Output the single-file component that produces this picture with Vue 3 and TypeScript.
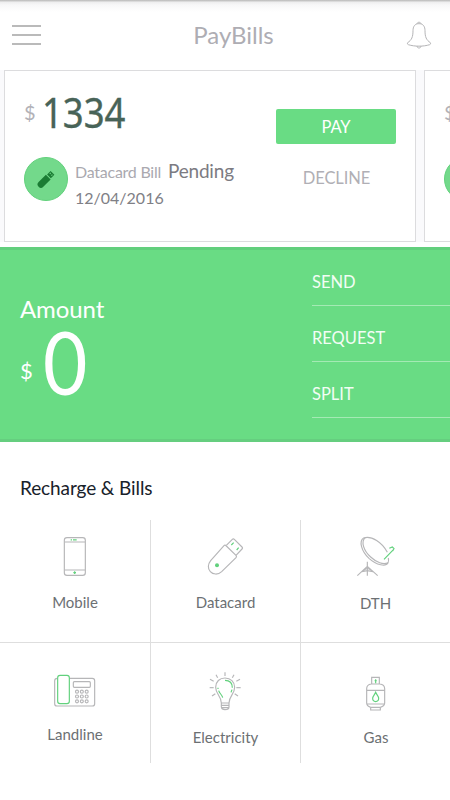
<script setup lang="ts">
interface Service {
  id: string
  label: string
}

const actions: string[] = ['SEND', 'REQUEST', 'SPLIT']

const services: Service[] = [
  { id: 'mobile', label: 'Mobile' },
  { id: 'datacard', label: 'Datacard' },
  { id: 'dth', label: 'DTH' },
  { id: 'landline', label: 'Landline' },
  { id: 'electricity', label: 'Electricity' },
  { id: 'gas', label: 'Gas' },
]

const keys = [126, 140.5, 155].flatMap((x) => [95, 109.5, 124].map((y) => ({ x, y })))
const rays = [
  'M120 37V48', 'M93 44L98 53', 'M147 44L142 53', 'M75 58L86 64', 'M165 58L154 64',
  'M74 83H86', 'M154 83H167', 'M81 108L91 101', 'M159 108L149 101',
]
</script>

<template>
  <div class="screen">
    <header class="topbar">
      <button class="menu" aria-label="Menu"><i></i><i></i><i></i></button>
      <h1>PayBills</h1>
      <svg class="bell" viewBox="0 0 78 84" width="26" height="28">
        <path d="M33 9C33 2 45 2 45 9M39 8C26 8 21 17 21 29C21 48 17 57 5 65Q2 69 7 71C25 77 53 77 71 71Q76 69 73 65C61 57 57 48 57 29C57 17 52 8 39 8ZM33 75C33 83 45 83 45 75" />
      </svg>
    </header>

    <section class="cards">
      <article class="card">
        <div class="details">
          <div class="price"><span class="cur">$</span><span class="value">1334</span></div>
          <div class="bill">
            <span class="badge">
              <svg viewBox="0 0 132 132" width="44" height="44">
                <g transform="rotate(45 65 68)">
                  <path d="M55 57H75V88A10 10 0 0 1 55 88Z" />
                  <path fill-rule="evenodd" d="M57 39H73V54H57ZM60 43V47H63V43ZM67 43V47H70V43Z" />
                </g>
              </svg>
            </span>
            <div class="info">
              <p class="kind"><span>Datacard Bill</span><b>Pending</b></p>
              <p class="date">12/04/2016</p>
            </div>
          </div>
        </div>
        <div class="buttons">
          <button class="pay">PAY</button>
          <button class="decline">DECLINE</button>
        </div>
      </article>
      <article class="card">
        <div class="details">
          <div class="price"><span class="cur">$</span></div>
          <div class="bill"><span class="badge"></span></div>
        </div>
      </article>
    </section>

    <section class="amount">
      <div class="sum">
        <h2>Amount</h2>
        <div class="total"><span class="sign">$</span><span class="zero">0</span></div>
      </div>
      <nav class="actions">
        <a v-for="action in actions" :key="action">{{ action }}</a>
      </nav>
    </section>

    <h3>Recharge &amp; Bills</h3>
    <section class="grid">
      <div v-for="s in services" :key="s.id" class="tile" :class="s.id">
        <svg v-if="s.id === 'mobile'" class="icon" viewBox="15 0 180 165">
          <rect x="73" y="38" width="63" height="113" rx="8" />
          <path d="M74 51H135M74 135H135" />
          <path class="hl" d="M92 44.500H96M99 44.500H110M100 143H108M104 139V147" />
        </svg>
        <svg v-else-if="s.id === 'datacard'" class="icon" viewBox="30 0 180 165">
          <path d="M117 62Q120 59 124 63L153 91Q156 94 153 98L110 140C99 150 84 149 76 140C67 131 69 117 77 107Z" />
          <path d="M124 61L142 43Q145 40 148 43L171 66Q174 69 171 72L153 91" />
          <path class="hl" d="M139 60L146 53M155 75L161 68" />
          <circle class="dot" cx="96" cy="121" r="6" />
        </svg>
        <svg v-else-if="s.id === 'dth'" class="icon" viewBox="30 0 180 165">
          <path d="M157 82C143 54 109 30 86 39C71 48 79 78 102 100C125 121 153 126 159 113Q162 107 160 99" />
          <path d="M91 38C76 50 87 78 107 96C124 112 145 120 159 113" />
          <path d="M97 110V152M97 124L67 152M97 124L128 152M85 136L97 130L110 136M80 140L97 137L114 140" />
          <path class="hl" d="M147 103L176 73M163 70L172 66L177 71L173 78" />
        </svg>
        <svg v-else-if="s.id === 'landline'" class="icon" viewBox="30 0 180 165">
          <path d="M103 55H172Q179 55 179 62V131Q179 138 172 138H66Q59 138 59 131V62Q59 55 67 55" />
          <rect x="115" y="65" width="51" height="17" rx="3" />
          <circle v-for="(k, i) in keys" :key="i" :cx="k.x" :cy="k.y" r="4.500" />
          <rect class="hl" x="68" y="46" width="35" height="85" rx="7" />
        </svg>
        <svg v-else-if="s.id === 'electricity'" class="icon" viewBox="30 0 180 165">
          <path v-for="r in rays" :key="r" :d="r" />
          <path d="M109 129C109 107 92 103 92 82C92 65 104 54 120 54C137 54 149 66 149 82C149 103 132 108 132 129ZM109 129V141Q110 149 120 149Q132 149 132 141V129M109 136H132M109 143H132" />
          <path class="hl" d="M120 61C135 61 142 71 142 83M141 89L138 97M99 83V87M101 92C104 101 111 104 113 113" />
        </svg>
        <svg v-else class="icon" viewBox="30 0 180 165">
          <path d="M110 71V52H133V71M109 72H134C143 73 149 78 149 86V129C149 137 142 140 136 142V150H107V142C101 140 95 137 95 129V86C95 78 101 73 109 72ZM95 91H149M95 132H149M107 142H136" />
          <path class="hl" d="M122 58V70M119 62H125M122 97C119 104 113 109 113 115C113 128 131 128 131 115C131 109 125 104 122 97Z" />
        </svg>
        <span class="label">{{ s.label }}</span>
      </div>
    </section>
  </div>
</template>

<style>
body {
  margin: 0;
  background: #fff;
}
</style>

<style scoped>
.screen {
  width: 450px;
  height: 800px;
  overflow: hidden;
  background: linear-gradient(#bdbdbd 0, #c8c8c8 1px, #ededee 2px, #f7f7f8 5px, #fff 12px);
  font-family: Lato, "Liberation Sans", sans-serif;
}
h1, h2, h3, p { margin: 0; font-weight: 400; }
button { border: 0; padding: 0; background: none; font: inherit; }
svg { display: block; }

.topbar {
  height: 70px;
  padding: 0 18px 0 12px;
  box-sizing: border-box;
  display: flex;
  align-items: center;
  justify-content: space-between;
}
.menu { width: 29px; margin-bottom: 1px; display: flex; flex-direction: column; gap: 7px; }
.menu i { height: 2px; background: #bababa; }
h1 { font-size: 24px; line-height: 30px; color: #aeadb3; padding-left: 20px; }
.bell { fill: none; stroke: #b5b5b7; stroke-width: 3; }

.cards {
  height: 172px;
  margin-bottom: 5px;
  padding-left: 4px;
  background: #fafafc;
  display: flex;
  gap: 8px;
}
.card {
  flex: 0 0 412px;
  height: 172px;
  box-sizing: border-box;
  border: 1px solid #dcdcde;
  padding: 0 19px;
  background: #fff;
  display: flex;
  justify-content: space-between;
}
.price { height: 86px; display: flex; align-items: flex-start; }
.cur { width: 18px; padding-top: 28px; font-size: 20px; line-height: 26px; color: #b2b1b7; }
.value {
  font-family: "Noto Sans", sans-serif;
  font-size: 41px;
  line-height: 82px;
  transform: scaleX(0.89);
  transform-origin: left;
  color: #486357;
  -webkit-text-stroke: 0.400px #486357;
}
.bill { display: flex; }
.badge {
  width: 44px;
  height: 44px;
  box-sizing: border-box;
  border-radius: 50%;
  background: #73d98b;
  border: 1px solid #62d17c;
}
.badge svg { margin: -1px; fill: #1b7c34; }
.info { padding: 1px 0 0 7px; white-space: nowrap; }
.kind { display: flex; align-items: baseline; line-height: 26px; font-size: 16px; letter-spacing: -0.250px; color: #aaa9af; }
.kind b { margin-left: 7px; font-size: 19px; font-weight: 400; letter-spacing: -0.200px; color: #7c7b82; }
.date { line-height: 26px; font-size: 16px; color: #808086; }
.buttons { width: 120px; padding-top: 38px; display: flex; flex-direction: column; }
.pay {
  height: 35px;
  border-radius: 2px;
  background: #69dc84;
  color: #fff;
  font-size: 16.500px;
  letter-spacing: -0.200px;
}
.decline { margin-top: 22px; padding-left: 1px; height: 24px; color: #b0afb5; font-size: 16.500px; letter-spacing: -0.100px; line-height: 24px; }

.amount {
  height: 195px;
  box-sizing: border-box;
  padding-left: 20px;
  background: #69dc84;
  border-top: 3px solid #62cf7d;
  border-bottom: 3px solid #65ce7f;
  display: flex;
  justify-content: space-between;
  color: #fff;
}
.sum { padding-top: 44px; }
h2 { font-size: 24px; line-height: 30px; letter-spacing: -0.100px; }
.total { display: flex; align-items: flex-start; }
.sign { width: 23px; padding-top: 32px; font-size: 22px; line-height: 30px; }
.zero { font-size: 87px; line-height: 76px; transform: scaleX(0.88); transform-origin: left; }
.actions { width: 138px; }
.actions a {
  display: block;
  height: 55px;
  border-bottom: 1px solid #a4eab4;
  line-height: 65px;
  font-size: 16.500px;
  color: #f2fdf4;
}

h3 { margin: 31px 0 17px 20px; font-size: 19px; line-height: 30px; letter-spacing: -0.100px; color: #18212a; }
.grid {
  display: grid;
  grid-template-columns: repeat(3, 150px);
  grid-template-rows: 123px 120px;
}
.tile {
  box-sizing: border-box;
  border-left: 1px solid #dedede;
  padding: 5px 1px 0 0;
  display: flex;
  flex-direction: column;
  align-items: center;
}
.tile:nth-child(3n + 1) { border-left: 0; padding-right: 0; }
.tile:nth-child(-n + 3) { border-bottom: 1px solid #dedede; }
.tile:nth-child(n + 4) { padding-top: 17px; }
.icon { width: 60px; height: 55px; fill: none; stroke: #b6b6b8; stroke-width: 3.500; }
.icon .hl { stroke: #62d17d; }
.icon .dot { fill: #62d17d; stroke: none; }
.label { margin-top: 12px; font-size: 15px; line-height: 20px; color: #6c7073; }
.datacard .label, .electricity .label { margin-left: 1px; }
.dth .label { margin: 13px 0 0 1px; }
.gas .label { margin: 12px 0 0 2px; }
.landline .label { margin-top: 9px; }
</style>
